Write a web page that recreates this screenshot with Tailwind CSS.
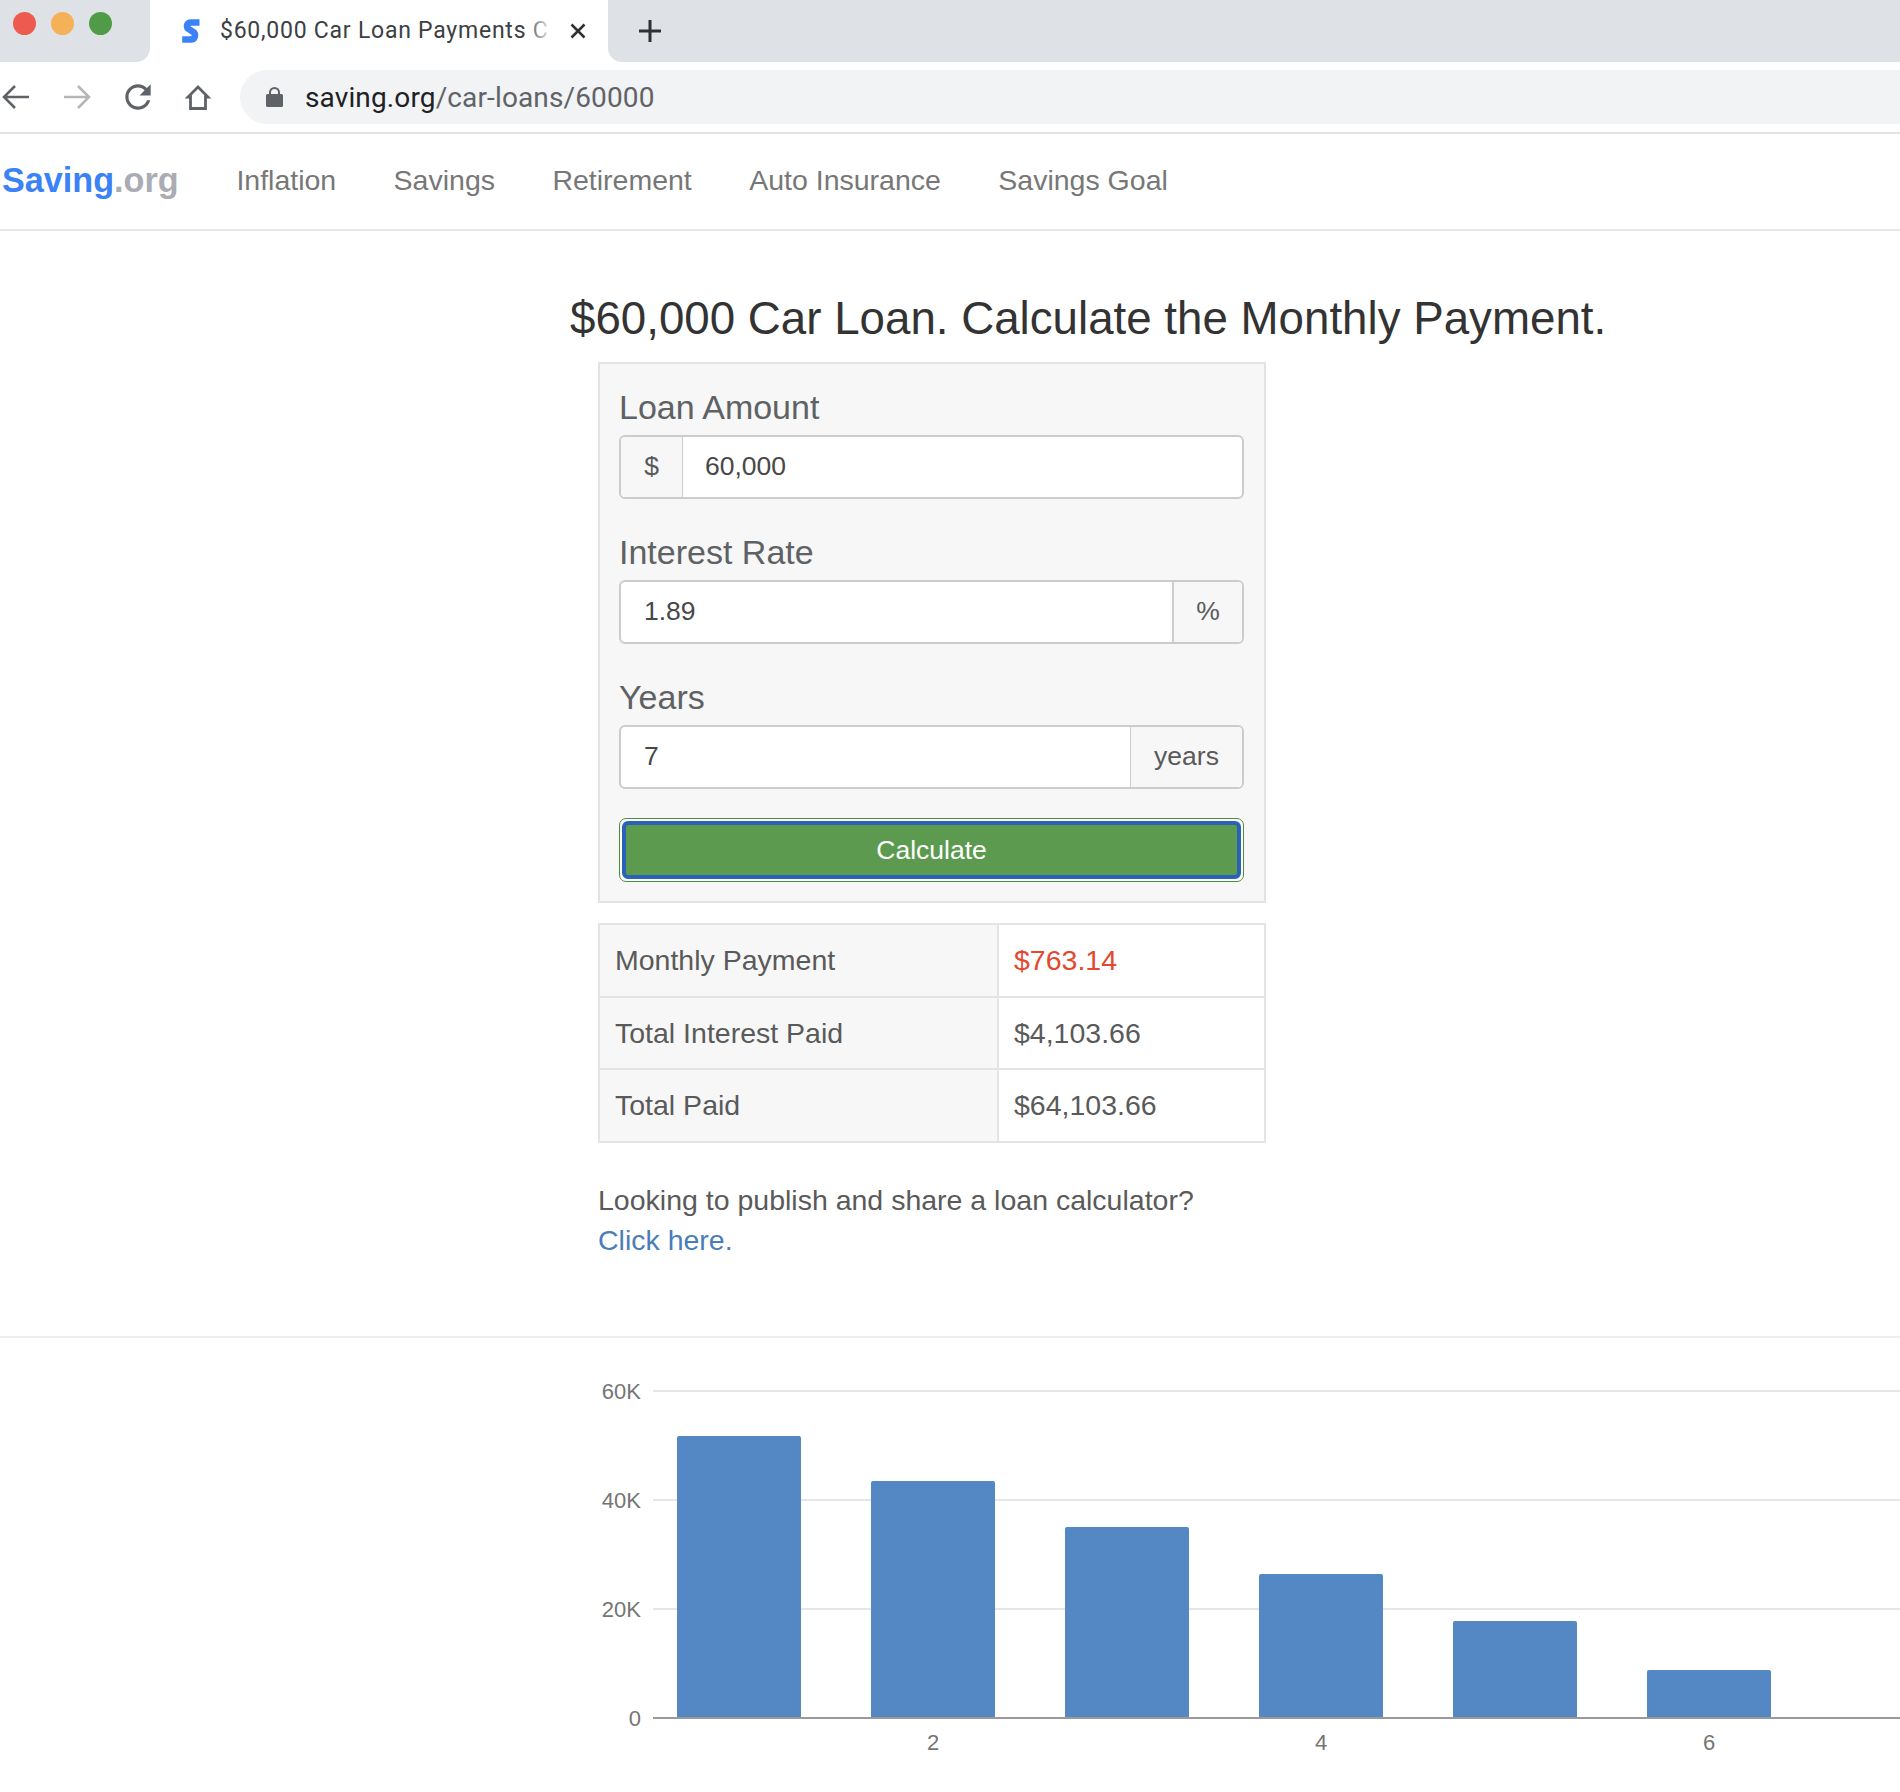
<!DOCTYPE html>
<html lang="en">
<head>
    <meta charset="UTF-8">
    <title>$60,000 Car Loan Payments Calculator</title>
    <script src="https://cdn.jsdelivr.net/npm/@tailwindcss/browser@4"></script>
</head>
<body class="bg-white font-['Liberation_Sans',Arial,sans-serif] text-[#5a5a5a]">
    <!-- Browser tab strip -->
    <div class="flex h-[62px] bg-white font-['Roboto',sans-serif]">
        <div class="flex w-[150px] items-start gap-[15px] rounded-br-[14px] bg-[#dee1e6] pl-[13px] pt-[12px]">
            <span class="h-[23px] w-[23px] rounded-full bg-[#ed5a4f]"></span>
            <span class="h-[23px] w-[23px] rounded-full bg-[#f5b158]"></span>
            <span class="h-[23px] w-[23px] rounded-full bg-[#4f9b47]"></span>
        </div>
        <div class="flex w-[458px] items-center rounded-t-[14px] bg-white">
            <svg class="ml-[31px] mr-[19px] h-[26px] w-[20px]" viewBox="0 0 20 26" fill="none" stroke="#3b82f6" stroke-width="6.600" stroke-linejoin="round"><path d="M18.500 4.500H10.500C4.800 4.500 5 10 8.500 11.500L11.500 13.500C15.500 15.500 14.500 21.500 9.500 21.500H1.200"/></svg>
            <div class="relative w-[333px] whitespace-nowrap text-[23px] tracking-[0.76px] text-[#3c4043]">
                $60,000 Car Loan Payments C
                <div class="absolute inset-y-0 right-0 w-[28px] bg-linear-to-r from-transparent to-white"></div>
            </div>
            <svg class="ml-[13px] h-[24px] w-[24px]" viewBox="0 0 24 24" fill="none" stroke="#2f3134" stroke-width="2.600"><path d="M5.500 5.500 18.500 18.500M18.500 5.500 5.500 18.500"/></svg>
        </div>
        <div class="flex flex-1 items-center rounded-bl-[14px] bg-[#dee1e6] pl-[30px]">
            <svg class="h-[24px] w-[24px]" viewBox="0 0 24 24" fill="none" stroke="#2f3134" stroke-width="3"><path d="M12 1V23M1 12H23"/></svg>
        </div>
    </div>

    <!-- Browser toolbar -->
    <div class="flex h-[72px] items-center border-b-2 border-[#e2e3e5]">
        <svg class="ml-[1px] h-[28px] w-[28px]" viewBox="0 0 28 28" fill="none" stroke="#5f6368" stroke-width="2.600"><path d="M28 14H3M14 3 3 14 14 25"/></svg>
        <svg class="ml-[35px] h-[28px] w-[28px]" viewBox="0 0 28 28" fill="none" stroke="#b4b6b9" stroke-width="2.600"><path d="M0 14H25M14 3 25 14 14 25"/></svg>
        <svg class="ml-[27px] h-[38px] w-[38px]" viewBox="0 0 24 24" fill="#5f6368"><path d="M17.650 6.350C16.200 4.900 14.210 4 12 4c-4.420 0-7.990 3.580-7.990 8s3.570 8 7.990 8c3.730 0 6.840-2.550 7.730-6h-2.080c-.82 2.330-3.040 4-5.650 4-3.310 0-6-2.690-6-6s2.690-6 6-6c1.660 0 3.140.69 4.220 1.780L13 11h7V4l-2.350 2.350z"/></svg>
        <svg class="ml-[26px] h-[30px] w-[30px]" viewBox="0 0 30 30" fill="none" stroke="#5f6368" stroke-width="2.800"><path d="M15 5 5 15H7.500V26.500H22.500V15H25Z"/></svg>
        <div class="ml-[27px] flex h-[54px] flex-1 items-center rounded-l-[27px] bg-[#f1f3f4] pl-[26px] font-['Roboto',sans-serif] text-[28px] tracking-[0.13px] text-[#5f6368]">
            <svg class="h-[20px] w-[17px]" viewBox="0 0 17 20" fill="#5f6368"><path d="M0 8.500A1.500 1.500 0 0 1 1.500 7H3V5.500a5.500 5.500 0 0 1 11 0V7h1.500A1.500 1.500 0 0 1 17 8.500V18.500A1.500 1.500 0 0 1 15.500 20H1.500A1.500 1.500 0 0 1 0 18.500ZM5 7h7V5.500a3.500 3.500 0 0 0-7 0Z"/></svg>
            <span class="ml-[22px] pt-[2px]"><span class="text-[#202124]">saving.org</span>/car-loans/60000</span>
        </div>
    </div>

    <!-- Site nav -->
    <nav class="flex h-[97px] items-center gap-[57.4px] border-b-2 border-[#e7e7e7] pb-[2px] text-[28.5px] text-[#777]">
        <a class="w-[179px] pl-[2px] text-[34.200px] font-bold text-[#3b82f6]">Saving<span class="text-[#a9adb3]">.org</span></a>
        <a>Inflation</a>
        <a>Savings</a>
        <a>Retirement</a>
        <a>Auto Insurance</a>
        <a>Savings Goal</a>
    </nav>

    <h1 class="ml-[570px] mt-[57.500px] mb-[13.500px] h-[60px] whitespace-nowrap text-[45.7px] leading-[60px] text-[#333]">$60,000 Car Loan. Calculate the Monthly Payment.</h1>

    <main class="ml-[598px] w-[668px] text-[28.5px]">
        <form class="border-2 border-[#e3e3e3] bg-[#f7f7f7] pl-[19px] pr-[20px] pt-[23px] pb-[19px]">
            <label class="mb-[8px] block h-[40px] text-[34px] leading-[40px] text-[#5f6264]">Loan Amount</label>
            <div class="mb-[33.500px] flex h-[63.500px] overflow-hidden rounded-md border-2 border-[#ccc] bg-white text-[26.500px] text-[#5a5a5a]">
                <span class="flex w-[62px] items-center justify-center border-r border-[#ccc] bg-[#f7f7f7] pt-[1px]">$</span>
                <input class="min-w-0 flex-1 px-[22px] pt-[1px] text-[#484848]" value="60,000" readonly>
            </div>
            <label class="mb-[8px] block h-[40px] text-[34px] leading-[40px] text-[#5f6264]">Interest Rate</label>
            <div class="mb-[33.500px] flex h-[63.500px] overflow-hidden rounded-md border-2 border-[#ccc] bg-white text-[26.500px] text-[#5a5a5a]">
                <input class="min-w-0 flex-1 px-[23px] pt-[1px] text-[#484848]" value="1.89" readonly>
                <span class="flex w-[70px] items-center justify-center border-l-2 border-[#ccc] bg-[#f7f7f7] pt-[1px]">%</span>
            </div>
            <label class="mb-[8px] block h-[40px] text-[34px] leading-[40px] text-[#5f6264]">Years</label>
            <div class="mb-[29.500px] flex h-[63.500px] overflow-hidden rounded-md border-2 border-[#ccc] bg-white text-[26.500px] text-[#5a5a5a]">
                <input class="min-w-0 flex-1 px-[23px] pt-[1px] text-[#484848]" value="7" readonly>
                <span class="flex w-[112px] items-center justify-center border-l border-[#ccc] bg-[#f7f7f7] pt-[1px]">years</span>
            </div>
            <div class="h-[64px] rounded-[7px] border border-[#4c8d40] bg-white p-[2px]">
                <button type="button" class="h-full w-full rounded-[6px] border-4 border-[#2a62b8] bg-[#5c9a50] pt-[1px] text-[26.500px] text-white">Calculate</button>
            </div>
        </form>

        <table class="mt-[20px] w-full border-collapse border-2 border-[#e4e4e4]">
            <tbody>
                <tr class="h-[73px]">
                    <td class="w-[399px] border-2 border-[#e4e4e4] bg-[#f7f7f7] pl-[15px]">Monthly Payment</td>
                    <td class="border-2 border-[#e4e4e4] pl-[15px] text-[#e2492f]">$763.14</td>
                </tr>
                <tr class="h-[72px]">
                    <td class="border-2 border-[#e4e4e4] bg-[#f7f7f7] pl-[15px]">Total Interest Paid</td>
                    <td class="border-2 border-[#e4e4e4] pl-[15px]">$4,103.66</td>
                </tr>
                <tr class="h-[73px]">
                    <td class="border-2 border-[#e4e4e4] bg-[#f7f7f7] pl-[15px]">Total Paid</td>
                    <td class="border-2 border-[#e4e4e4] pl-[15px]">$64,103.66</td>
                </tr>
            </tbody>
        </table>

        <p class="mt-[37px] leading-[40px]">Looking to publish and share a loan calculator?<br><a class="text-[#4a7db8]">Click here.</a></p>
    </main>

    <div class="mt-[76px] border-t-2 border-[#eee]"></div>

    <!-- Chart -->
    <svg class="mt-[1px] block" width="1900" height="452" viewBox="0 0 1900 452">
        <g stroke="#e6e6e6" stroke-width="2">
            <path d="M653 52H1900"/>
            <path d="M653 161H1900"/>
            <path d="M653 270H1900"/>
        </g>
        <g fill="#5388c4">
            <path d="M677 99a2 2 0 0 1 2-2h120a2 2 0 0 1 2 2V379H677Z"/>
            <path d="M871 144a2 2 0 0 1 2-2h120a2 2 0 0 1 2 2V379H871Z"/>
            <path d="M1065 190a2 2 0 0 1 2-2h120a2 2 0 0 1 2 2V379H1065Z"/>
            <path d="M1259 237a2 2 0 0 1 2-2h120a2 2 0 0 1 2 2V379H1259Z"/>
            <path d="M1453 284a2 2 0 0 1 2-2h120a2 2 0 0 1 2 2V379H1453Z"/>
            <path d="M1647 333a2 2 0 0 1 2-2h120a2 2 0 0 1 2 2V379H1647Z"/>
        </g>
        <path d="M653 379H1900" stroke="#999" stroke-width="2"/>
        <g class="fill-[#757575] text-[22px]" text-anchor="end" dominant-baseline="central">
            <text x="641" y="52">60K</text>
            <text x="641" y="161">40K</text>
            <text x="641" y="270">20K</text>
            <text x="641" y="379">0</text>
        </g>
        <g class="fill-[#757575] text-[22px]" text-anchor="middle" dominant-baseline="central">
            <text x="933" y="403">2</text>
            <text x="1321" y="403">4</text>
            <text x="1709" y="403">6</text>
        </g>
    </svg>
</body>
</html>
